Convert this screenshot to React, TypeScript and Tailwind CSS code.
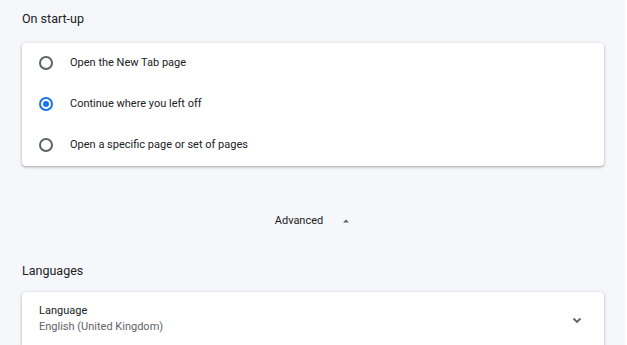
import React, { useState } from 'react';

const options = [
  'Open the New Tab page',
  'Continue where you left off',
  'Open a specific page or set of pages',
];

const Radio = ({ checked }: { checked: boolean }) => (
  <span
    className={`flex h-[14px] w-[14px] items-center justify-center rounded-full border-2 ${
      checked ? 'border-[#1a73e8]' : 'border-[#5f6368]'
    }`}
  >
    {checked && <span className="h-[6px] w-[6px] rounded-full bg-[#1a73e8]" />}
  </span>
);

const App: React.FC = () => {
  const [selected, setSelected] = useState(1);

  return (
    <div className="flex min-h-[345px] w-full bg-white font-['Roboto',_'Liberation_Sans',_sans-serif] text-[11px] text-[#202124]">
      <div className="flex w-[625px] flex-col bg-[#f5f7fa] pl-[22px] pr-[21px] pt-[9px]">
        {/* On start-up */}
        <div className="h-[20px] text-[12.5px] leading-[20px]">On start-up</div>
        <div className="mt-[14px] rounded-[4px] bg-white shadow-[0_1px_2px_rgba(60,64,67,0.3),0_1px_3px_1px_rgba(60,64,67,0.12)]">
          {options.map((label, i) => (
            <button
              key={label}
              type="button"
              onClick={() => setSelected(i)}
              className="flex h-[41px] w-full items-center gap-[17px] pb-[2px] pl-[17px] text-left"
            >
              <Radio checked={selected === i} />
              <span className="leading-[20px]">{label}</span>
            </button>
          ))}
        </div>

        {/* Advanced */}
        <div className="mt-[35px] flex h-[40px] items-center justify-center gap-[18px]">
          <span className="leading-[20px]">Advanced</span>
          <svg width="10" height="10" viewBox="0 0 10 10">
            <path d="M2 6.5 L5 3.5 L8 6.5 Z" fill="#5f6368" />
          </svg>
        </div>

        {/* Languages */}
        <div className="mt-[20px] h-[20px] text-[12.5px] leading-[20px]">Languages</div>
        <div className="mt-[11px] flex flex-1 items-start justify-between rounded-t-[4px] bg-white pl-[17px] pr-[21px] pt-[11px] shadow-[0_1px_2px_rgba(60,64,67,0.3),0_1px_3px_1px_rgba(60,64,67,0.12)]">
          <div className="flex flex-col">
            <span className="leading-[16px]">Language</span>
            <span className="leading-[16px] text-[#5f6368]">English (United Kingdom)</span>
          </div>
          <svg className="mt-[11px]" width="12" height="12" viewBox="0 0 12 12">
            <path d="M2.5 4.5 L6 8 L9.5 4.5" fill="none" stroke="#5f6368" strokeWidth="1.8" />
          </svg>
        </div>
      </div>
    </div>
  );
};

export default App;
